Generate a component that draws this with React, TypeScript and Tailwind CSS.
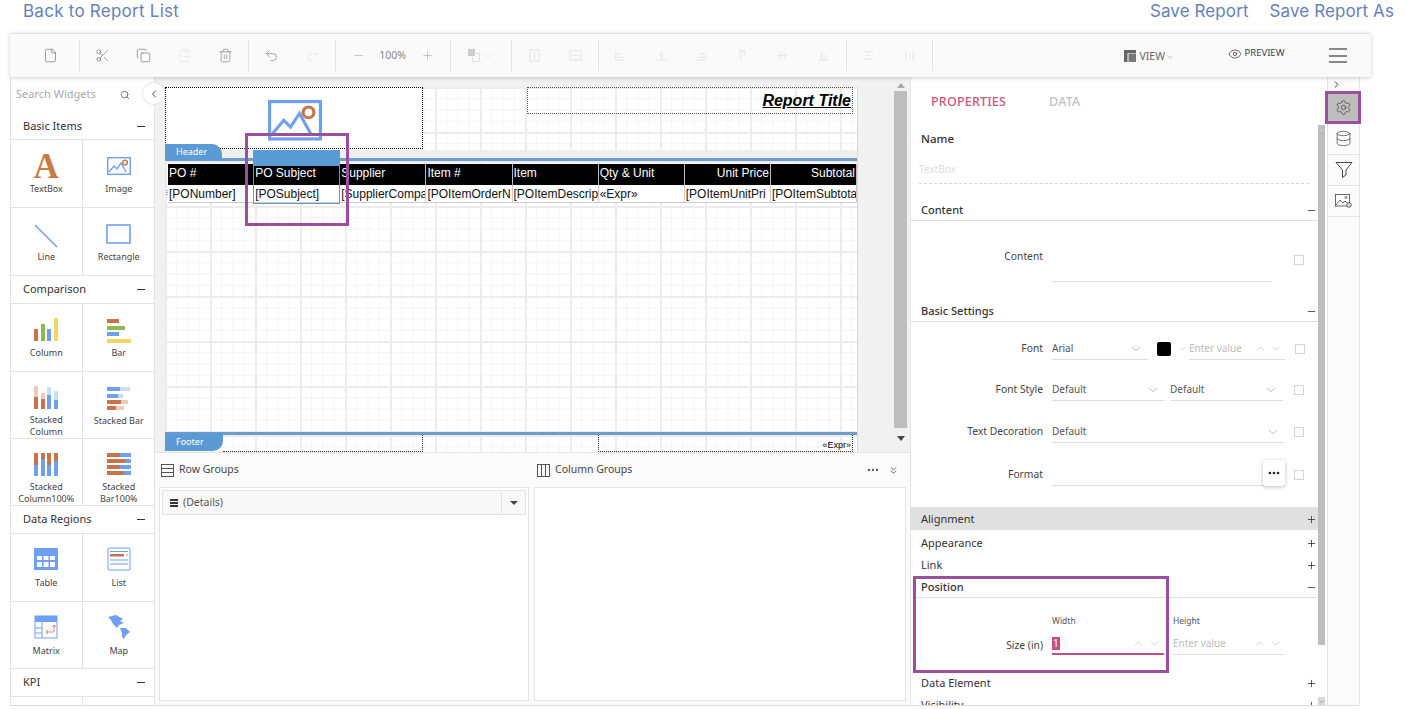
import React from 'react';
import { File, Scissors, Copy, ClipboardPaste, Trash2, Undo2, Redo2, Minus, Plus, Eye, Search, ChevronLeft, ChevronRight, ChevronDown, ChevronUp, ChevronsDown, Settings, Database, MoreHorizontal } from 'lucide-react';

const O = '#c8734a', G = '#8fb84e', B = '#6f9ff0', Y = '#f0d860', LO = '#edcdb9', LB = '#c9dcfa';
type R = [number, number, number, number, string];
function Rects({ items, w = 26, h = 26 }: { items: R[]; w?: number; h?: number }) {
  return (
    <svg width={w} height={h} viewBox={`0 0 ${w} ${h}`}>
      {items.map((r, i) => <rect key={i} x={r[0]} y={r[1]} width={r[2]} height={r[3]} fill={r[4]} />)}
    </svg>
  );
}
const ImageIco = ({ s = 24, sw = 1.4 }: { s?: number; sw?: number }) => (
  <svg width={s} height={s * 0.75} viewBox="0 0 24 18" fill="none">
    <rect x="0.7" y="0.7" width="22.6" height="16.6" stroke={B} strokeWidth={sw} />
    <path d="M2 15l5-6 3 3 4-6 5 9" stroke={B} strokeWidth={sw} />
    <circle cx="18" cy="5.5" r="2.4" stroke={O} strokeWidth={sw} />
  </svg>
);
const widgets1: [string, React.ReactNode][] = [
  ['TextBox', <span className="mb-[3px] text-[35px] font-bold leading-[28px] text-[#c97b46] [font-family:Liberation_Serif,serif]">A</span>],
  ['Image', <span className="mb-[4px]"><ImageIco /></span>],
  ['Line', <svg width="26" height="26"><path d="M2 2l22 22" stroke={B} strokeWidth="1.4" /></svg>],
  ['Rectangle', <svg width="26" height="22" className="mb-[5px]"><rect x="1" y="2" width="23" height="18" fill="none" stroke={B} strokeWidth="1.6" /></svg>],
];
const widgets2: [React.ReactNode, React.ReactNode][] = [
  ['Column', <Rects items={[[1, 12, 4, 12, O], [8, 7, 4, 17, G], [14, 12, 4, 12, B], [21, 1, 4, 23, Y]]} />],
  ['Bar', <Rects items={[[1, 2, 12, 4, O], [1, 9, 18, 4, G], [1, 15, 12, 4, B], [1, 22, 24, 4, Y]]} />],
  [<>Stacked<br />Column</>, <Rects items={[[1, 1, 4, 11, LO], [1, 12, 4, 12, O], [8, 8, 4, 6, LO], [8, 14, 4, 10, O], [14, 2, 4, 8, LB], [14, 10, 4, 14, B], [21, 6, 4, 9, LB], [21, 15, 4, 9, B]]} />],
  ['Stacked Bar', <Rects items={[[1, 2, 13, 4, B], [14, 2, 10, 4, LB], [1, 9, 11, 4, B], [12, 9, 5, 4, LB], [1, 15, 14, 4, O], [15, 15, 7, 4, LO], [1, 21, 9, 4, O], [10, 21, 8, 4, LO]]} />],
  [<>Stacked<br />Column100%</>, <Rects items={[[1, 1, 4, 12, O], [1, 13, 4, 11, B], [8, 1, 4, 6, O], [8, 7, 4, 17, B], [14, 1, 4, 12, O], [14, 13, 4, 11, B], [21, 1, 4, 8, O], [21, 9, 4, 15, B]]} />],
  [<>Stacked<br />Bar100%</>, <Rects items={[[1, 1, 13, 4, O], [14, 1, 11, 4, B], [1, 7, 19, 4, O], [20, 7, 5, 4, B], [1, 13, 13, 4, O], [14, 13, 11, 4, B], [1, 19, 17, 4, O], [18, 19, 7, 4, B]]} />],
];
const widgets3: [string, React.ReactNode][] = [
  ['Table', <Rects items={[[1, 1, 24, 22, B], [4, 9, 5, 4, '#fff'], [10.5, 9, 5, 4, '#fff'], [17, 9, 5, 4, '#fff'], [4, 15, 5, 5, '#fff'], [10.5, 15, 5, 5, '#fff'], [17, 15, 5, 5, '#fff']]} />],
  ['List', <svg width="24" height="24"><rect x="1" y="1" width="22" height="22" rx="1" fill="none" stroke={B} /><rect x="3" y="7" width="14" height="2.5" fill={O} /><path d="M3 4.5h18M3 13h18M3 17h18" stroke={B} /><path d="M19 8h2" stroke={B} /></svg>],
  ['Matrix', <svg width="24" height="24"><rect x="1" y="1" width="22" height="22" fill="none" stroke={B} /><rect x="1" y="1" width="22" height="6" fill={B} /><path d="M8 7v16M1 13h7M1 18h7" stroke={B} /><path d="M20 10v7h-8m2-2l-2 2 2 2M18 12l2-2 2 2" stroke={O} fill="none" strokeWidth=".8" /></svg>],
  ['Map', <svg width="24" height="25"><path d="M1 2l8-2 7 4-3 2 4 2-5 2-2 3-4-4-2-4zM13 13l6 0 4 4-4 3-2 4-2-2 0-4z" fill={B} /></svg>],
];

function Sec({ title, first }: { title: string; first?: boolean }) {
  return (
    <div className={`flex items-center justify-between border-b border-[#e3e3e3] pl-[12px] pr-[9px] text-[11px] text-[#333] ${first ? 'h-[31px] pt-[5px]' : 'h-[28px]'}`}>
      <span>{title}</span><span className="block h-px w-[8px] bg-[#333]" />
    </div>
  );
}
function Cell({ label, icon, h = 68, top }: { label: React.ReactNode; icon: React.ReactNode; h?: number; top?: boolean }) {
  return (
    <div style={{ height: h }} className="flex flex-col items-center overflow-hidden border-b border-r border-[#e3e3e3] pt-[13px] text-center text-[9px] leading-[12px] text-[#444] even:border-r-0">
      <div className={`flex h-[30px] justify-center ${top ? 'items-start' : 'items-center'}`}>{icon}</div>
      <div>{label}</div>
    </div>
  );
}
const Sep = () => <div className="mx-[2px] h-[31px] w-px bg-[#e2e2e2]" />;
const T = ({ children, w = 'w-[41px]' }: { children?: React.ReactNode; w?: string }) => <div className={`flex items-center justify-center ${w}`}>{children}</div>;
const Faint = ({ d }: { d: string }) => (
  <svg width="13" height="13" viewBox="0 0 14 14" fill="none" stroke="#e8e8e8" strokeWidth="1.3"><path d={d} /></svg>
);

const colsH: [string, boolean][] = [['PO #', false], ['PO Subject', false], ['Supplier', false], ['Item #', false], ['Item', false], ['Qty & Unit', false], ['Unit Price', true], ['Subtotal', true]];
const colsD = ['[PONumber]', '[POSubject]', '[SupplierCompa', '[POItemOrderN', '[POItemDescrip', '«Expr»', '[POItemUnitPri', '[POItemSubtota'];
const grid = "bg-[linear-gradient(#ececec_2px,transparent_2px),linear-gradient(90deg,#ececec_2px,transparent_2px),linear-gradient(#f3f3f3_1px,transparent_1px),linear-gradient(90deg,#f3f3f3_1px,transparent_1px)] bg-size-[45px_45px,45px_45px,11.25px_11.25px,11.25px_11.25px]";

function Chk() { return <span className="block h-[10px] w-[10px] border border-[#d4d4d4]" />; }
function Label({ children }: { children: React.ReactNode }) { return <div className="w-[133px] shrink-0 text-right text-[10.3px] text-[#444]">{children}</div>; }
function Sel({ v, w, cls = '' }: { v: string; w: string; cls?: string }) {
  return (
    <div className={`flex h-[22px] items-center justify-between border-b border-[#dedede] pr-[5px] text-[10px] text-[#555] ${w} ${cls}`}>
      <span>{v}</span><ChevronDown size={14} strokeWidth={0.9} color="#777" />
    </div>
  );
}
function Num({ w, v, active }: { w: string; v?: string; active?: boolean }) {
  return (
    <div className={`flex h-[22px] items-center justify-between pr-[3px] text-[10px] ${w} ${active ? 'border-b-2 border-[#c64f84]' : 'border-b border-[#dedede]'}`}>
      {v ? <span className="bg-[#c94d80] px-px leading-[13px] text-white">{v}</span> : <span className="text-[#bdbdbd]">Enter value</span>}
      <span className="flex gap-[3px]"><ChevronUp size={13} strokeWidth={0.8} color="#999" /><ChevronDown size={13} strokeWidth={0.8} color="#999" /></span>
    </div>
  );
}
function PSec({ title, open, cls = '' }: { title: string; open?: boolean; cls?: string }) {
  return (
    <div className={`flex items-center justify-between pl-[11px] pr-[1px] text-[11px] text-[#333] ${cls}`}>
      <span>{title}</span>
      {open ? <Minus size={11} strokeWidth={1.6} color="#222" /> : <Plus size={11} strokeWidth={1.6} color="#222" />}
    </div>
  );
}

export default function App() {
  return (
    <div className="relative h-[709px] w-[1406px] overflow-hidden bg-white [font-family:Noto_Sans,sans-serif]">
      <div className="flex h-[33px] items-start justify-between pl-[23px] pr-[12px] text-[17px] leading-[22px] text-[#6581b8] [font-family:Inter,sans-serif]">
        <span className="tracking-[0.25px]">Back to Report List</span>
        <span className="flex gap-[21px] tracking-[0.1px]"><span>Save Report</span><span>Save Report As</span></span>
      </div>

      <div className="ml-[10px] h-[673px] w-[1350px] border-b border-[#dedede]">
        {/* toolbar */}
        <div className="relative z-10 flex h-[44px] w-[1361px] items-center border-t border-[#e0e0e0] bg-[#fafafa] pl-[19.5px] shadow-[0_1px_4px_rgba(0,0,0,0.2)]">
          <T><File size={15} strokeWidth={1} color="#666" /></T><div className="w-[6px]" /><Sep />
          <T><Scissors size={15} strokeWidth={1} color="#666" /></T>
          <T><Copy size={15} strokeWidth={1} color="#666" /></T>
          <T><ClipboardPaste size={15} strokeWidth={1} color="#e2e2e2" /></T>
          <T><Trash2 size={15} strokeWidth={1} color="#777" /></T><Sep />
          <T><Undo2 size={15} strokeWidth={1} color="#777" /></T>
          <T><Redo2 size={15} strokeWidth={1} color="#e2e2e2" /></T><Sep />
          <T><Minus size={13} strokeWidth={1} color="#999" /></T>
          <T w="w-[28px]"><span className="text-[10.5px] text-[#888]">100%</span></T>
          <T><Plus size={13} strokeWidth={1} color="#999" /></T><Sep />
          <T w="w-[56px]"><span className="flex items-center gap-[2px]"><svg width="12" height="13" viewBox="0 0 12 13"><rect width="7" height="7" fill="#ccc" /><path d="M8 4.5h3.5v8H4.5V8" fill="none" stroke="#ddd" /></svg><ChevronDown size={12} strokeWidth={1} color="#ccc" /></span></T><Sep />
          <T><Faint d="M2 1h10v12H2zM7 3v8" /></T><T><Faint d="M1 2h12v10H1zM3 7h8" /></T><Sep />
          <T w="w-[40.5px]"><Faint d="M2 2v10h10M4 5h4M4 9h7" /></T>
          <T w="w-[40.5px]"><Faint d="M1 12h12M7 3v9M4 6h6" /></T>
          <T w="w-[40.5px]"><Faint d="M1 12h12M6 5h6M3 9h9" /></T>
          <T w="w-[40.5px]"><Faint d="M5 2v10M9 2v7M3 2h8" /></T>
          <T w="w-[40.5px]"><Faint d="M1 7h12M5 3v8M9 4v6" /></T>
          <T w="w-[40.5px]"><Faint d="M1 12h12M5 3v9M9 6v6" /></T><Sep />
          <T w="w-[40.5px]"><Faint d="M2 3h10M2 11h10M4 7h6" /></T>
          <T w="w-[40.5px]"><Faint d="M3 2v10M11 2v10M7 4v6" /></T><Sep />
          <div className="ml-[189px] flex w-[52px] items-center gap-[4px] pt-[3px] text-[10.5px] text-[#666]">
            <svg width="12" height="12" viewBox="0 0 12 12" className="-mt-[2px]"><rect y="0" width="12" height="3" fill="#666" /><rect y="3" width="3.5" height="9" fill="#666" /><rect x="4.5" y="3.5" width="7.5" height="8.5" fill="#777" /></svg>
            <span className="flex items-center">VIEW<ChevronDown size={10} strokeWidth={1} /></span>
          </div>
          <div className="mb-[4px] ml-[52px] flex items-center gap-[3px] text-[9.5px] text-[#444]"><Eye size={14} strokeWidth={1.2} color="#333" />PREVIEW</div>
          <div className="ml-[45px] flex w-[18px] flex-col gap-[4.5px]"><span className="h-[2px] bg-[#888]" /><span className="h-[2px] bg-[#888]" /><span className="h-[2px] bg-[#888]" /></div>
        </div>

        <div className="flex h-[628px]">
          {/* widgets */}
          <div className="relative w-[145px] shrink-0 overflow-hidden border-l border-r border-[#e3e3e3]">
            <div className="flex h-[32px] items-center justify-between pl-[5px] pr-[24px] pt-[3px] text-[11px] text-[#aaa]">
              <span className="w-full">Search Widgets</span><Search size={10} color="#666" className="ml-[-10px] shrink-0" />
            </div>
            <Sec title="Basic Items" first />
            <div className="grid grid-cols-[71.5px_72.5px]">{widgets1.map(([l, i]) => <Cell key={l} label={l} icon={i} />)}</div>
            <Sec title="Comparison" />
            <div className="grid grid-cols-[71.5px_72.5px]">{widgets2.map(([l, i], k) => <Cell key={k} label={l} icon={i} top h={k < 2 ? 68 : 67} />)}</div>
            <Sec title="Data Regions" />
            <div className="grid grid-cols-[71.5px_72.5px]">{widgets3.map(([l, i]) => <Cell key={l} label={l} icon={i} top h={67.5} />)}</div>
            <Sec title="KPI" />
            <div className="grid h-[10px] grid-cols-[71.5px_72.5px]"><div className="border-r border-[#e3e3e3]" /></div>
          </div>

          {/* center */}
          <div className="relative flex w-[755px] shrink-0 flex-col">
            <div className="absolute left-[-13px] top-[5px] z-20 flex h-[23px] w-[23px] items-center justify-center rounded-full border border-[#e5e5e5] bg-white"><ChevronLeft size={12} color="#444" /></div>
            <div className="flex h-[375px] bg-[#f1f1f1] pl-[10px] pt-[10px]">
              <div className="flex h-[365px] w-[693px] flex-col border-r border-[#d8d8d8] bg-white">
                {/* header band */}
                <div className={`relative h-[63px] ${grid}`}>
                  <div className="absolute left-0 top-0 flex h-[62px] w-[258px] items-start justify-center border border-dotted border-black bg-white pl-[1px] pt-[12px]">
                    <ImageIco s={54} sw={1.4} />
                  </div>
                  <div className="absolute left-[362px] top-0 flex h-[27px] w-[326px] items-center justify-end border border-dotted border-[#555] pr-[1px] text-[16px] font-bold italic text-black underline [font-family:Liberation_Sans,sans-serif]">Report Title</div>
                </div>
                <div className="relative h-[11px] border-b-[3px] border-[#6f9bcb] bg-[#efefef]">
                  <div className="absolute left-0 top-[-6px] flex h-[16px] w-[57px] items-center rounded-tr-[10px] bg-[#5b9bd5] pl-[11px] text-[9px] text-white">Header</div>
                </div>
                {/* body */}
                <div className={`relative flex-1 ${grid}`}>
                  <div className="absolute left-[3px] top-[3px] w-[689px] text-[12px] [font-family:Liberation_Sans,sans-serif]">
                    <div className="grid h-[21px] grid-cols-8 bg-black text-white">
                      {colsH.map(([c, right]) => <div key={c} className={`flex items-center overflow-hidden whitespace-nowrap border-r border-[#bbb] pb-[3px] ${right ? 'justify-end pr-[1px]' : 'pl-[1px]'}`}>{c}</div>)}
                    </div>
                    <div className="grid h-[18px] grid-cols-8 border-b border-[#ccc] bg-white text-[#111]">
                      {colsD.map((c) => <div key={c} className="flex items-center overflow-hidden whitespace-nowrap border-r border-[#ccc] pl-[1px]">{c}</div>)}
                    </div>
                    <div className="absolute left-[85px] top-[-14px] h-[15px] w-[87px] bg-[#5b9bd5]" />
                    <div className="absolute left-[85px] top-[1px] h-[39px] w-[87px] border border-[#5b9bd5]" />
                    <div className="absolute left-[-2px] top-[26px] flex w-[2px] flex-col gap-[1px]"><i className="h-px bg-[#aaa]" /><i className="h-px bg-[#aaa]" /><i className="h-px bg-[#aaa]" /></div>
                  </div>
                </div>
                {/* footer */}
                <div className={`relative h-[20px] border-t-[3px] border-[#6f9bcb] ${grid}`}>
                  <div className="absolute left-0 top-[-2px] flex h-[18px] w-[58px] items-center rounded-br-[10px] bg-[#5b9bd5] pl-[11px] text-[9px] text-white">Footer</div>
                  <div className="absolute left-[58px] top-0 h-[17px] w-[200px] border-b border-r border-dotted border-[#333]" />
                  <div className="absolute left-[433px] top-0 flex h-[17px] w-[255px] items-end justify-end border-b border-l border-r border-dotted border-[#333] pr-[1px] text-[9px] leading-[11px] text-black [font-family:Liberation_Sans,sans-serif]">«Expr»</div>
                </div>
              </div>
              <div className="ml-[36px] flex w-[13px] flex-col items-center">
                <span className="mb-[3px] mt-[-4px] h-0 w-0 border-x-[4px] border-b-[5px] border-x-transparent border-b-[#aaa]" />
                <div className="h-[337px] w-[13px] bg-[#bdbdbd]" />
                <span className="mt-[8px] h-0 w-0 border-x-[4px] border-t-[5px] border-x-transparent border-t-[#444]" />
              </div>
            </div>
            {/* groups */}
            <div className="flex flex-1 flex-col border-t border-[#e3e3e3] bg-[#fbfbfb] px-[4px] pb-[4px]">
              <div className="flex h-[34px] items-center text-[10.5px] text-[#444]">
                <div className="flex w-[375px] items-center gap-[5px] pl-[2px]">
                  <svg width="13" height="13"><rect x=".5" y=".5" width="12" height="12" fill="none" stroke="#555" /><path d="M0 4.5h13M0 8.5h13" stroke="#555" /></svg>Row Groups
                </div>
                <div className="flex items-center gap-[5px] pl-[3px]">
                  <svg width="13" height="13"><rect x=".5" y=".5" width="12" height="12" fill="none" stroke="#555" /><path d="M4.5 0v13M8.5 0v13" stroke="#555" /></svg>Column Groups
                </div>
                <div className="ml-auto flex items-center gap-[8px] pr-[7px]"><MoreHorizontal size={14} color="#555" /><ChevronsDown size={11} color="#555" /></div>
              </div>
              <div className="flex flex-1 gap-[5px]">
                <div className="w-[370px] border border-[#e3e3e3] bg-white p-[2px]">
                  <div className="flex h-[25px] items-center border border-[#e3e3e3] bg-[#f8f8f8] pl-[7px] pt-[1px] text-[10.5px] text-[#555]">
                    <span className="mr-[5px] flex w-[8px] flex-col gap-[1.5px]"><i className="h-[1.5px] bg-[#333]" /><i className="h-[1.5px] bg-[#333]" /><i className="h-[1.5px] bg-[#333]" /></span>
                    (Details)
                    <span className="ml-auto flex h-full w-[24px] items-center justify-center border-l border-[#e3e3e3]"><span className="h-0 w-0 border-x-[4px] border-t-[4px] border-x-transparent border-t-[#444]" /></span>
                  </div>
                </div>
                <div className="flex-1 border border-[#e3e3e3] bg-white" />
              </div>
            </div>
          </div>

          {/* properties */}
          <div className="flex h-full w-[417px] shrink-0 bg-white shadow-[inset_1px_0_0_#e3e3e3]">
            <div className="w-[408px] overflow-hidden">
              <div className="flex h-[47px] items-center gap-[43px] pl-[21px] pt-[3px] text-[12.5px] font-medium tracking-[0.2px]"><span className="text-[#c9577f]">PROPERTIES</span><span className="text-[#c2c2c2]">DATA</span></div>
              <div className="flex h-[29px] items-center pl-[11px] text-[11.5px] font-medium text-[#333]">Name</div>
              <div className="ml-[9px] flex h-[31px] w-[390px] items-center border-b border-dashed border-[#d5d5d5] pt-[3px] text-[10px] text-[#dcdcdc]">TextBox</div>
              <PSec title="Content" open cls="h-[37px] border-b border-[#e0e0e0] pt-[16px] font-medium" />
              <div className="flex h-[76px]">
                <div className="pt-[28px]"><Label>Content</Label></div>
                <div className="ml-[9px] h-[61px] w-[220px] border-b border-[#dedede]" />
                <div className="ml-[22px] pt-[34px]"><Chk /></div>
              </div>
              <PSec title="Basic Settings" open cls="h-[25px] border-b border-[#e0e0e0] pt-[4px] font-medium" />
              <div className="flex items-center pt-[16px]">
                <Label>Font</Label>
                <Sel v="Arial" w="w-[96px]" cls="ml-[9px]" />
                <span className="ml-[9px] block h-[14px] w-[14px] rounded-[2px] bg-black" />
                <ChevronDown size={10} strokeWidth={0.9} color="#999" className="ml-[6px]" />
                <span className="ml-[2px]" /><Num w="w-[97px]" />
                <span className="ml-[9px]"><Chk /></span>
              </div>
              <div className="flex items-center pt-[19px]">
                <Label>Font Style</Label>
                <Sel v="Default" w="w-[113px]" cls="ml-[9px]" />
                <Sel v="Default" w="w-[113px]" cls="ml-[5px]" />
                <span className="ml-[11px]"><Chk /></span>
              </div>
              <div className="flex items-center pt-[20px]">
                <Label>Text Decoration</Label>
                <Sel v="Default" w="w-[233px]" cls="ml-[9px]" />
                <span className="ml-[9px]"><Chk /></span>
              </div>
              <div className="flex items-center pt-[21px]">
                <Label>Format</Label>
                <div className="relative ml-[9px] h-[22px] w-[233px] border-b border-[#dedede]">
                  <div className="absolute right-0 top-[-4px] flex h-[26px] w-[22px] items-center justify-center rounded-[3px] bg-white shadow-[0_1px_4px_rgba(0,0,0,0.25)]"><MoreHorizontal size={14} strokeWidth={2.6} color="#222" /></div>
                </div>
                <span className="ml-[9px]"><Chk /></span>
              </div>
              <PSec title="Alignment" cls="mt-[21px] h-[23px] bg-[#e0e0e0] pt-[2px]" />
              <PSec title="Appearance" cls="mt-[2px] h-[22px]" />
              <PSec title="Link" cls="h-[22px]" />
              <PSec title="Position" open cls="h-[22px] border-b border-[#e0e0e0] pt-[2px] font-medium" />
              <div className="flex h-[74px] items-start pt-[17px]">
                <div className="pt-[23px]"><Label>Size (in)</Label></div>
                <div className="ml-[9px] w-[112px]"><div className="text-[8.5px] leading-[12px] text-[#555]">Width</div><div className="mt-[6px]"><Num w="w-[112px]" v="1" active /></div></div>
                <div className="ml-[9px] w-[112px]"><div className="text-[8.5px] leading-[12px] text-[#555]">Height</div><div className="mt-[6px]"><Num w="w-[112px]" /></div></div>
              </div>
              <PSec title="Data Element" cls="h-[22px]" />
              <PSec title="Visibility" cls="h-[22px]" />
            </div>
            <div className="flex w-[8px] flex-col pt-[48px]">
              <div className="flex h-[520px] w-[7px] justify-center bg-[#bdbdbd] pt-[2px]"><ChevronUp size={7} strokeWidth={1.5} color="#eee" /></div>
              <div className="mt-[52px] flex h-[8px] w-[7px] items-center justify-center bg-[#d8d8d8]"><ChevronDown size={7} strokeWidth={1.5} color="#666" /></div>
            </div>
          </div>

          {/* rail */}
          <div className="flex w-[33px] shrink-0 flex-col items-center border-l border-r border-[#e3e3e3] bg-[#fbfbfb]">
            <div className="flex h-[15px] w-full items-center pl-[3px]"><ChevronRight size={11} color="#333" /></div>
            <div className="flex h-[31px] w-full items-center justify-center bg-[#bdbdbd]"><Settings size={17} strokeWidth={0.9} color="#333" /></div>
            <div className="flex h-[32px] w-full items-center justify-center border-b border-[#e3e3e3]"><Database size={17} strokeWidth={0.9} color="#333" /></div>
            <div className="flex h-[31px] w-full items-center justify-center border-b border-[#e3e3e3]"><svg width="18" height="18" viewBox="0 0 18 18" fill="none" stroke="#333" strokeWidth=".9"><path d="M1 1.5h16L11 9v5l-3.5 2.5V9z" /></svg></div>
            <div className="flex h-[31px] w-full items-center justify-center border-b border-[#e3e3e3]"><svg width="17" height="14" viewBox="0 0 17 14" fill="none" stroke="#444" strokeWidth=".8"><rect x=".5" y=".5" width="14" height="11.5" /><path d="M1 11l4-5 3 3 2-2 3 3" /><circle cx="11" cy="3.5" r="1" /><circle cx="14" cy="11" r="2.3" fill="#ddd" /></svg></div>
          </div>
        </div>
      </div>

      {/* annotation boxes */}
      <div className="absolute left-[245px] top-[133px] h-[93px] w-[104px] border-[3px] border-[#9b4f9e]" />
      <div className="absolute left-[913px] top-[576px] h-[97px] w-[256px] border-[3px] border-[#9b4f9e]" />
      <div className="absolute left-[1325px] top-[91px] h-[33px] w-[36px] border-[3px] border-[#9b4f9e]" />
    </div>
  );
}
